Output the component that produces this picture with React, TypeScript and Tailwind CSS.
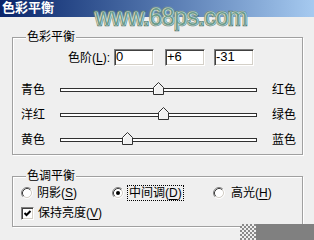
import React from 'react'

const sliders = [
  { left: '青色', right: '红色', value: 0 },
  { left: '洋红', right: '绿色', value: 6 },
  { left: '黄色', right: '蓝色', value: -31 },
]

const levels = [
  { text: '0', ml: 'ml-0' },
  { text: '+6', ml: 'ml-[11px]' },
  { text: '-31', ml: 'ml-[9px]' },
]

function Radio({ checked }: { checked?: boolean }) {
  return (
    <svg width="12" height="12" viewBox="0 0 12 12" className="shrink-0">
      <circle cx="6" cy="6" r="4" fill="#fff" />
      <path d="M2.11 9.89 A5.5 5.5 0 0 1 9.89 2.11" fill="none" stroke="#808080" />
      <path d="M2.82 9.18 A4.5 4.5 0 0 1 9.18 2.82" fill="none" stroke="#404040" />
      <path d="M9.89 2.11 A5.5 5.5 0 0 1 2.11 9.89" fill="none" stroke="#fff" />
      <path d="M9.18 2.82 A4.5 4.5 0 0 1 2.82 9.18" fill="none" stroke="#d4d0c8" />
      {checked && <circle cx="6" cy="6" r="2" fill="#000" />}
    </svg>
  )
}

function Thumb() {
  return (
    <svg width="11" height="13" viewBox="0 0 11 13">
      <polygon points="0.5,5.5 5.5,0.5 10.5,5.5 10.5,12.5 0.5,12.5" fill="#f0f0f0" stroke="#303030" />
      <polyline points="1.5,12 1.5,5.9 5.5,1.9" fill="none" stroke="#fff" />
    </svg>
  )
}

export default function App() {
  return (
    <div className="relative h-[240px] w-[314px] overflow-hidden bg-[#efefef] font-['Liberation_Sans','Noto_Sans_CJK_SC',sans-serif] text-[12px] text-black">
      <div className="h-[17px] bg-gradient-to-r from-[#0a246a] to-[#a6caf0] pl-[2px] text-[13px] font-bold leading-[16px] text-white">
        色彩平衡
      </div>

      {/* 色彩平衡 group */}
      <div className="relative ml-[12px] mt-[20px] h-[118px] w-[291px] border border-[#a0a0a0] pt-[11px] shadow-[inset_1px_1px_0_#fff,1px_1px_0_#fff]">
        <span className="absolute left-[13px] top-[-8px] bg-[#efefef] px-[1px] leading-[14px]">
          色彩平衡
        </span>

        <div className="flex h-[17px] items-center">
          <div className="w-[101px] pr-[4px] text-right">
            色阶(<u className="underline-offset-2">L</u>):
          </div>
          {levels.map((l) => (
            <div
              key={l.text}
              className={`${l.ml} h-[17px] w-[40px] border border-b-white border-l-[#808080] border-r-white border-t-[#808080] bg-white pl-[1px] text-[13px] leading-[14px] shadow-[inset_1px_1px_0_#404040,inset_-1px_-1px_0_#d4d0c8]`}
            >
              {l.text}
            </div>
          ))}
        </div>

        <div className="mt-[11px]">
          {sliders.map((s) => (
            <div key={s.left} className="flex h-[25px] items-center pl-[8px]">
              <div className="w-[39px]">{s.left}</div>
              <div className="relative h-[4px] w-[197px] border border-[#303030] bg-white">
                <div
                  className="absolute top-[-7px]"
                  style={{ left: ((s.value + 100) / 200) * 196 - 6.5 }}
                >
                  <Thumb />
                </div>
              </div>
              <div className="ml-[15px]">{s.right}</div>
            </div>
          ))}
        </div>
      </div>

      {/* 色调平衡 group */}
      <div className="relative ml-[12px] mt-[21px] h-[51px] w-[291px] border border-[#a0a0a0] pt-[7px] shadow-[inset_1px_1px_0_#fff,1px_1px_0_#fff]">
        <span className="absolute left-[13px] top-[-8px] bg-[#efefef] px-[1px] leading-[14px]">
          色调平衡
        </span>

        <div className="flex h-[18px] items-center pl-[8px]">
          <div className="flex w-[91px] items-center">
            <Radio />
            <span className="ml-[4px]">
              阴影(<u className="underline-offset-2">S</u>)
            </span>
          </div>
          <div className="flex w-[101px] items-center">
            <Radio checked />
            <span className="ml-[3px] flex h-[16px] items-center border border-dotted border-black px-[1px]">
              中间调(<u className="underline-offset-2">D</u>)
            </span>
          </div>
          <div className="flex items-center">
            <Radio />
            <span className="ml-[6px]">
              高光(<u className="underline-offset-2">H</u>)
            </span>
          </div>
        </div>

        <div className="mt-[2px] flex h-[18px] items-center pl-[8px]">
          <div className="flex h-[13px] w-[13px] items-center justify-center border border-b-white border-l-[#808080] border-r-white border-t-[#808080] bg-white shadow-[inset_1px_1px_0_#404040,inset_-1px_-1px_0_#d4d0c8]">
            <svg width="9" height="9" viewBox="0 0 9 9">
              <path d="M1.5 4 L3.5 6 L7.5 2" fill="none" stroke="#000" strokeWidth="2" />
            </svg>
          </div>
          <span className="ml-[4px]">
            保持亮度(<u className="underline-offset-2">V</u>)
          </span>
        </div>
      </div>

      {/* watermark */}
      <div className="absolute left-[95px] top-[6px] font-['Liberation_Sans',sans-serif] text-[23px] leading-none tracking-[-0.2px] text-[#6c9c8a] [-webkit-text-stroke:2.5px_#3f6e5e] [paint-order:stroke_fill] [text-shadow:0_0_2px_#fff,0_0_2px_#fff,0_0_1px_#fff]">
        www.68ps.com
      </div>

      {/* corner outside the dialog */}
      <div className="absolute bottom-0 left-[240px] h-[16px] w-[16px] bg-[repeating-conic-gradient(#8a8a8a_0_25%,#efefef_0_50%)] bg-[length:4px_4px]" />
      <div className="absolute bottom-0 right-0 h-[16px] w-[58px] bg-[#808080]" />
    </div>
  )
}
